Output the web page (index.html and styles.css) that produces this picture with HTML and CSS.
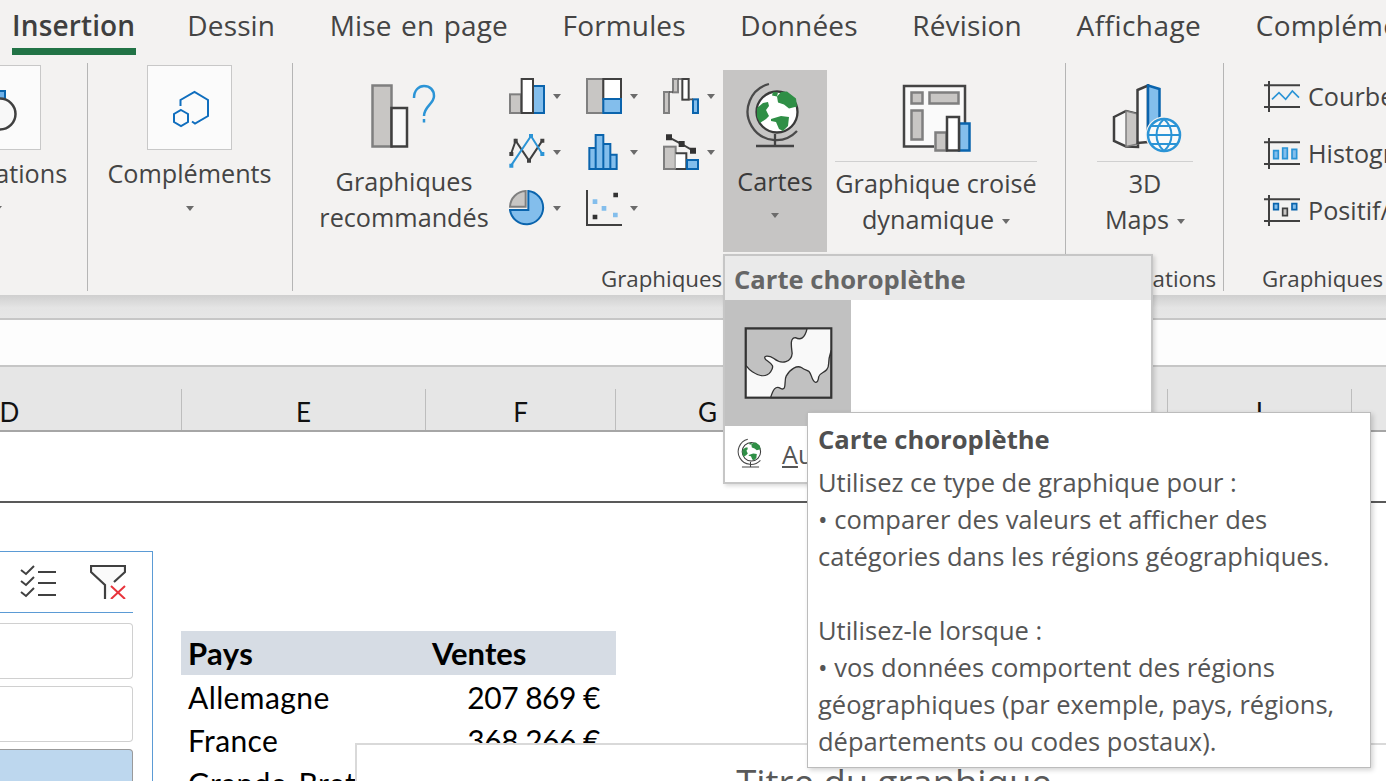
FILE: index.html
```html
<!DOCTYPE html>
<html lang="fr">
<head>
<meta charset="utf-8">
<title>Excel - Insertion</title>
<link rel="stylesheet" href="styles.css">
</head>
<body>
<svg class="defs" width="0" height="0" aria-hidden="true">
  <symbol id="globe" viewBox="746 82 60 70">
    <path d="M770 84 A28.500 28.500 0 1 0 798 131" fill="none" stroke="#4a4a4a" stroke-width="2.300"/>
    <circle cx="778" cy="112" r="20.500" fill="#fff" stroke="#3a3a3a" stroke-width="2.300"/>
    <path d="M782 92 l6 -.5 9 7 1 8 -8 2 -5 -4 -6 -2 -1 -6z M774 92 l5 .5 -1 4 -5 -1z M758 108 l6 -5 5 -1 1 4 -3 4 3 6 -3 3 -6 4 -3 -6z M772 119 l10 -3 8 1 -1 9 -5 5 -4 -2 -3 -7 -5 -1z" fill="#2f8f46"/>
    <path d="M776 134 V146 M757 146 H795" fill="none" stroke="#444" stroke-width="2.300"/>
  </symbol>
  <symbol id="spark-frame" viewBox="0 0 108 93">
    <path d="M15 0 V93 M0 13 H108 M0 78 H108" fill="none" stroke="#404040" stroke-width="6"/>
  </symbol>
</svg>

<section class="ribbon">
  <nav class="tabs">
    <span class="tab tab-active">Insertion</span>
    <span class="tab">Dessin</span>
    <span class="tab">Mise en page</span>
    <span class="tab">Formules</span>
    <span class="tab">Données</span>
    <span class="tab">Révision</span>
    <span class="tab tab-wide">Affichage</span>
    <span class="tab">Compléments</span>
  </nav>
  <div class="groups">
    <div class="group group-illus">
      <div class="tile-btn tile-btn-clip">
        <div class="tile">
          <svg class="tile-svg" viewBox="0 0 84 84">
            <rect x="40" y="25" width="8" height="10" fill="#6fb1e8" stroke="#0a64ad" stroke-width="2"/>
            <circle cx="43" cy="48" r="15.500" fill="#f8f8f8" stroke="#404040" stroke-width="2.500"/>
          </svg>
        </div>
        <span class="btn-label">Illustrations</span>
        <i class="caret caret-block"></i>
      </div>
    </div>
    <div class="group group-addins">
      <div class="tile-btn tile-btn-addins">
        <div class="tile">
          <svg class="tile-svg" viewBox="0 0 84 84">
            <path d="M32.500 40 V34 L46.500 26 L60 34 V50 L47 57.500 L44 55.500 M33 44 L40 48 V56 L33 60 L26 56 V48 Z" fill="none" stroke="#106ebe" stroke-width="2"/>
          </svg>
        </div>
        <span class="btn-label">Compléments</span>
        <i class="caret caret-block"></i>
      </div>
    </div>
    <div class="group group-charts">
      <div class="charts-row">
        <div class="big-btn big-rec">
          <svg class="icon-rec" viewBox="371 84 66 64">
            <rect x="372.500" y="85.500" width="19" height="61" fill="#c8c6c4" stroke="#7f7f7f" stroke-width="2.500"/>
            <rect x="391.500" y="108" width="15.500" height="38.500" fill="#f8f8f8" stroke="#404040" stroke-width="2.500"/>
            <path d="M414 98 C414 90 419 86 424 86 C430 86 434 90 434 96 C434 104 424 106 424 116 M424 119 V122.500" fill="none" stroke="#2b94d6" stroke-width="2.500"/>
          </svg>
          <span class="big-text">Graphiques<br>recommandés</span>
        </div>
        <div class="chart-grid">
          <div class="mini">
            <svg class="mini-svg" viewBox="0 0 108 108"><rect x="3" y="49" width="33" height="56" fill="#c8c6c4" stroke="#7f7f7f" stroke-width="6"/><rect x="72" y="24" width="33" height="81" fill="#83beec" stroke="#0a64ad" stroke-width="6"/><rect x="38" y="3" width="34" height="102" fill="#fff" stroke="#404040" stroke-width="6"/></svg>
            <i class="caret"></i>
          </div>
          <div class="mini">
            <svg class="mini-svg" viewBox="0 0 108 108"><rect x="3" y="3" width="49" height="102" fill="#c8c6c4" stroke="#7f7f7f" stroke-width="6"/><rect x="52" y="3" width="53" height="60" fill="#fff" stroke="#404040" stroke-width="6"/><rect x="52" y="63" width="53" height="42" fill="#83beec" stroke="#0a64ad" stroke-width="6"/></svg>
            <i class="caret"></i>
          </div>
          <div class="mini">
            <svg class="mini-svg" viewBox="0 0 108 108"><rect x="3" y="42" width="15" height="63" fill="#c8c6c4" stroke="#7f7f7f" stroke-width="6"/><rect x="30" y="3" width="15" height="40" fill="#c8c6c4" stroke="#7f7f7f" stroke-width="6"/><rect x="58" y="3" width="19" height="62" fill="#fff" stroke="#404040" stroke-width="6"/><rect x="90" y="64" width="15" height="41" fill="#83beec" stroke="#0a64ad" stroke-width="6"/><path d="M18 42 H30 M45 3 H58 M77 64 H90" stroke="#555" stroke-width="5"/></svg>
            <i class="caret"></i>
          </div>
          <div class="mini">
            <svg class="mini-svg" viewBox="0 0 108 108"><path d="M6 60 L20 20 L60 80 L100 20" fill="none" stroke="#404040" stroke-width="6"/><path d="M6 95 L66 6 L100 60" fill="none" stroke="#2b94d6" stroke-width="6"/><path d="M1 54 h12 v12 h-12z M14 14 h12 v12 h-12z M54 74 h12 v12 h-12z M94 14 h12 v12 h-12z" fill="#404040"/><path d="M1 89 h12 v12 h-12z M60 0 h12 v12 h-12z M94 54 h12 v12 h-12z" fill="#2b94d6"/></svg>
            <i class="caret"></i>
          </div>
          <div class="mini">
            <svg class="mini-svg" viewBox="-7 0 108 108"><path d="M3 42 H22 V105 H3Z M45 30 H66 V105 H45Z M66 62 H85 V105 H66Z M22 3 H45 V105 H22Z" fill="#83beec" stroke="#0a64ad" stroke-width="6"/></svg>
            <i class="caret"></i>
          </div>
          <div class="mini">
            <svg class="mini-svg" viewBox="0 0 108 108"><rect x="3" y="38" width="35" height="67" fill="#c8c6c4" stroke="#7f7f7f" stroke-width="6"/><path d="M38 58 H70 V105 H38" fill="#fff" stroke="#404040" stroke-width="6"/><rect x="72" y="78" width="33" height="27" fill="#83beec" stroke="#0a64ad" stroke-width="6"/><path d="M18 10 L56 30 L90 50" fill="none" stroke="#404040" stroke-width="6"/><path d="M9 1 h18 v18 h-18z M47 21 h18 v18 h-18z M81 41 h18 v18 h-18z" fill="#333"/></svg>
            <i class="caret"></i>
          </div>
          <div class="mini">
            <svg class="mini-svg" viewBox="0 0 108 108"><path d="M3 50 A49 49 0 0 1 50 3 V50Z" fill="#c8c6c4" stroke="#7f7f7f" stroke-width="6"/><path d="M58 3 A50 50 0 1 1 3 60 H58Z" fill="#83beec" stroke="#0a64ad" stroke-width="6"/></svg>
            <i class="caret"></i>
          </div>
          <div class="mini">
            <svg class="mini-svg" viewBox="0 0 108 108"><path d="M3 0 V105 H108" fill="none" stroke="#404040" stroke-width="6"/><path d="M82 8 h14 v14 h-14z M20 74 h14 v14 h-14z" fill="#333"/><path d="M20 28 h14 v14 h-14z M47 48 h14 v14 h-14z M81 68 h14 v14 h-14z" fill="#83beec"/></svg>
            <i class="caret"></i>
          </div>
        </div>
        <div class="big-btn big-maps">
          <svg class="icon-globe"><use href="#globe"/></svg>
          <span class="big-text">Cartes</span>
          <i class="caret caret-block"></i>
        </div>
        <div class="big-btn big-pivot">
          <svg class="icon-pivot" viewBox="902 84 70 68">
            <path d="M934 146.500 H904 V86 H965 V125" fill="#fafafa" stroke="#444" stroke-width="2.500"/>
            <path d="M911.500 92.500 h11 v11 h-11z M929.500 92.500 h29 v11 h-29z M911.500 110.500 h11 v29 h-11z M935.500 132.500 h11 v18 h-11z" fill="#c8c6c4" stroke="#7f7f7f" stroke-width="2.500"/>
            <rect x="959" y="123.500" width="10.500" height="27" fill="#83beec" stroke="#0a64ad" stroke-width="2.500"/>
            <rect x="947" y="117" width="12" height="33.500" fill="#fff" stroke="#404040" stroke-width="2.500"/>
          </svg>
          <div class="rule"></div>
          <span class="big-text big-text-split">Graphique croisé<br>dynamique<i class="caret caret-inline"></i></span>
        </div>
      </div>
      <div class="group-label group-label-charts">Graphiques</div>
    </div>
    <div class="group group-tours">
      <div class="big-btn big-3d">
        <svg class="icon-3d" viewBox="1112 84 72 70">
          <path d="M1114 117 L1126 111 L1138 114 V147 L1126 146.500 L1114 141Z" fill="#f8f8f8" stroke="#404040" stroke-width="2.500"/>
          <path d="M1126 111 L1138 114 V144 L1126 146.500Z" fill="#c8c6c4" stroke="#7f7f7f" stroke-width="1.500"/>
          <path d="M1137.500 90 L1148 85.500 V142 L1137.500 143Z" fill="#fafafa" stroke="#404040" stroke-width="2.500"/>
          <path d="M1148 85.500 L1159.500 89 V125 L1148 132Z" fill="#83beec" stroke="#0a64ad" stroke-width="2.500"/>
          <circle cx="1164" cy="135" r="18.500" fill="#f3f2f1"/>
          <circle cx="1164" cy="135" r="16" fill="#fafafa" stroke="#2b94d6" stroke-width="2.500"/>
          <path d="M1148 135 H1180 M1151 126 H1177 M1151 144 H1177 M1164 119 C1154 128 1154 142 1164 151 C1174 142 1174 128 1164 119Z" fill="none" stroke="#2b94d6" stroke-width="2"/>
        </svg>
        <div class="rule rule-short"></div>
        <span class="big-text big-text-split">3D<br>Maps<i class="caret caret-inline"></i></span>
      </div>
      <div class="group-label group-label-center">Présentations</div>
    </div>
    <div class="group group-spark">
      <div class="spark-list">
        <div class="spark-row">
          <svg class="spark-svg" viewBox="0 0 108 93"><use href="#spark-frame"/><path d="M24 55 L45 35 L65 55 L85 30 L105 50" fill="none" stroke="#2b94d6" stroke-width="5"/></svg>
          <span class="spark-text">Courbe</span>
        </div>
        <div class="spark-row">
          <svg class="spark-svg" viewBox="0 0 108 93"><use href="#spark-frame"/><path d="M29 38 h14 v24 h-14z M56 30 h14 v32 h-14z M84 34 h14 v28 h-14z" fill="#83beec" stroke="#2b94d6" stroke-width="5"/></svg>
          <span class="spark-text">Histogramme</span>
        </div>
        <div class="spark-row">
          <svg class="spark-svg" viewBox="0 0 108 93"><use href="#spark-frame"/><path d="M29 26 h14 v18 h-14z M84 26 h14 v18 h-14z" fill="#83beec" stroke="#0a64ad" stroke-width="5"/><path d="M56 40 h14 v22 h-14z" fill="#c8c6c4" stroke="#404040" stroke-width="5"/></svg>
          <span class="spark-text">Positif/Négatif</span>
        </div>
      </div>
      <div class="group-label group-label-spark">Graphiques sparkline</div>
    </div>
  </div>
</section>

<div class="formula-gap"></div>
<div class="formula-bar"></div>

<div class="col-headers">
  <span class="col col-d">D</span>
  <span class="col col-e">E</span>
  <span class="col col-f">F</span>
  <span class="col col-g">G</span>
  <span class="col col-h">H</span>
  <span class="col col-i">I</span>
  <span class="col col-j">J</span>
</div>

<main class="sheet">
  <div class="sheet-top"></div>
  <div class="sheet-body">
    <aside class="slicer">
      <div class="slicer-tools">
        <svg class="tool-check" viewBox="0 0 36 33">
          <path d="M1 5 L6 9 L14 1 M1 16 L6 20 L14 12 M1 27 L6 31 L14 23" fill="none" stroke="#404040" stroke-width="2"/>
          <path d="M18 7 H36 M18 18 H36 M18 30 H36" stroke="#404040" stroke-width="2"/>
        </svg>
        <svg class="tool-filter" viewBox="0 0 36 34">
          <path d="M15 34 V20 L1 7 V1 H35 V7 L24 17" fill="#fafafa" stroke="#404040" stroke-width="2.200"/>
          <path d="M21 21 L35 34 M35 21 L21 34" stroke="#e8343c" stroke-width="2"/>
        </svg>
      </div>
      <div class="slicer-item"></div>
      <div class="slicer-item"></div>
      <div class="slicer-item slicer-item-on"></div>
    </aside>
    <table class="data">
      <thead>
        <tr><th class="cell-country">Pays</th><th class="cell-sales">Ventes</th></tr>
      </thead>
      <tbody>
        <tr><td class="cell-country">Allemagne</td><td class="cell-num">207 869 €</td></tr>
        <tr><td class="cell-country">France</td><td class="cell-num">368 266 €</td></tr>
        <tr><td class="cell-country">Grande-Bretagne</td><td class="cell-num">112 410 €</td></tr>
      </tbody>
    </table>
  </div>
  <div class="chart"><div class="chart-title">Titre du graphique</div></div>
</main>

<div class="dropdown">
  <div class="dd-head">Carte choroplèthe</div>
  <div class="dd-body">
    <div class="dd-tile">
      <svg class="choro" viewBox="86 230 266 217">
        <rect x="90" y="234" width="258" height="209" fill="#f9f9f9"/>
        <path d="M275 235 C268 265 255 270 240 262 C222 262 228 290 230 310 C228 335 200 345 175 325 C160 315 140 315 150 328 C165 340 180 345 165 365 C150 385 125 375 110 365 C98 358 95 350 90 345 L90 235 Z" fill="#c1c1c1" stroke="#333" stroke-width="4"/>
        <path d="M165 443 C172 420 180 405 195 415 C215 425 205 390 212 378 C225 355 245 345 258 352 C275 365 280 355 288 378 C295 400 308 405 310 380 C312 365 340 370 340 340 C340 320 345 310 348 300 L348 443 Z" fill="#c1c1c1" stroke="#333" stroke-width="4"/>
        <rect x="90" y="234" width="258" height="209" fill="none" stroke="#333" stroke-width="6.500"/>
      </svg>
    </div>
  </div>
  <div class="dd-foot">
    <svg class="globe-small"><use href="#globe"/></svg>
    <span class="dd-more"><u>A</u>utres graphiques de carte...</span>
  </div>
</div>

<div class="tooltip">
  <div class="tt-title">Carte choroplèthe</div>
  <p class="tt-line">Utilisez ce type de graphique pour :</p>
  <p class="tt-line">• comparer des valeurs et afficher des</p>
  <p class="tt-line">catégories dans les régions géographiques.</p>
  <p class="tt-line tt-gap">Utilisez-le lorsque :</p>
  <p class="tt-line">• vos données comportent des régions</p>
  <p class="tt-line">géographiques (par exemple, pays, régions,</p>
  <p class="tt-line">départements ou codes postaux).</p>
</div>
</body>
</html>
```
FILE: styles.css
```css
* { box-sizing: border-box; }
html, body { margin: 0; padding: 0; }
body {
  position: relative;
  width: 1386px;
  height: 781px;
  overflow: hidden;
  background: #fff;
  font-family: "Open Sans", "Noto Sans", sans-serif;
  color: #444;
}
.defs { position: absolute; }

/* ribbon */
.ribbon { height: 295px; background: #f3f2f1; overflow: hidden; }
.tabs {
  display: flex;
  gap: 54.600px;
  height: 63px;
  padding: 4px 0 0 12px;
  white-space: nowrap;
}
.tab { font-size: 28px; line-height: 43px; height: 51px; word-spacing: 2px; letter-spacing: .15px; }
.tab-wide { letter-spacing: .45px; }
.tab-active {
  font-weight: 600;
  color: #3f3f3f;
  padding-right: 1px;
  margin-right: -3.600px;
  border-bottom: 7px solid #217346;
}
.groups { display: flex; height: 228px; }
.group { position: relative; flex: none; border-right: 1.500px solid #b5b5b5; height: 228px; }
.group-illus { width: 88px; }
.group-addins { width: 205px; }
.group-charts { width: 773px; }
.group-tours { width: 158px; }
.group-spark { flex: 1; border-right: none; }

.tile-btn {
  display: flex;
  flex-direction: column;
  align-items: center;
  padding-top: 2px;
  white-space: nowrap;
}
.tile-btn-clip { width: 84px; margin-left: -44px; }
.tile-btn-addins { margin-left: -1px; }
.tile {
  width: 85px;
  height: 85px;
  flex: none;
  background: #fbfbfb;
  border: 1px solid #c8c8c8;
}
.tile-svg { display: block; width: 84px; height: 84px; }
.btn-label { font-size: 25.200px; line-height: 32px; margin-top: 7px; }
.caret {
  display: block;
  width: 0;
  height: 0;
  border-left: 4.500px solid transparent;
  border-right: 4.500px solid transparent;
  border-top: 5px solid #6b6b6b;
  flex: none;
}
.caret-block { margin-top: 17px; }
.caret-inline { display: inline-block; margin-left: 8px; vertical-align: 5px; }

.charts-row { display: flex; height: 190px; padding-top: 7px; }
.big-btn {
  display: flex;
  flex-direction: column;
  align-items: center;
  flex: none;
  white-space: nowrap;
}
.big-text { font-size: 25.200px; line-height: 36px; text-align: center; }
.big-rec { width: 168px; margin-left: 27px; padding-top: 14px; }
.icon-rec { width: 66px; height: 64px; }
.big-rec .big-text { margin-top: 16px; line-height: 35.500px; }

.chart-grid {
  display: grid;
  grid-template-columns: repeat(3, 77px);
  grid-auto-rows: 56px;
  width: 214px;
  margin-left: 21px;
  padding-top: 8px;
}
.mini { display: flex; align-items: center; gap: 8px; height: 36px; }
.mini-svg { width: 36px; height: 36px; flex: none; }

.big-maps { width: 104px; height: 182px; background: #c6c5c4; color: #3a3a3a; padding-top: 12px; }
.icon-globe { width: 60px; height: 70px; }
.big-maps .big-text { margin-top: 11px; }
.big-maps .caret { margin-top: 14px; }

.big-pivot { width: 202px; margin-left: 8px; padding-top: 14px; }
.icon-pivot { width: 70px; height: 68px; margin-left: 2px; }
.rule { width: 100%; height: 1px; background: #d0d0d0; margin-top: 9px; flex: none; }
.big-text-split { margin-top: 3px; }

.group-label {
  position: absolute;
  top: 202px;
  font-size: 22.300px;
  line-height: 28px;
  white-space: nowrap;
}
.group-label-charts { left: 308px; }
.group-label-center { left: 0; right: 0; text-align: center; }
.group-label-spark { left: 38px; }

.big-3d { width: 96px; margin-left: 31px; padding-top: 21px; }
.icon-3d { width: 72px; height: 70px; margin-left: 6px; }
.big-3d .rule { margin-top: 7px; }

.spark-list { display: flex; flex-direction: column; gap: 25px; padding: 17px 0 0 40px; }
.spark-row { display: flex; align-items: center; gap: 8px; height: 32px; white-space: nowrap; }
.spark-svg { width: 36px; height: 31px; flex: none; }
.spark-text { font-size: 25.200px; }

/* formula area */
.formula-gap { height: 23px; background: linear-gradient(#cfcfcf, #e4e4e4 55%, #e6e6e6); }
.formula-bar {
  height: 49px;
  background: #fdfdfd;
  border-top: 2px solid #c6c6c6;
  border-bottom: 2px solid #c6c6c6;
}

/* column headers */
.col-headers {
  display: flex;
  height: 65px;
  padding-top: 22px;
  background: #e6e6e6;
  border-bottom: 2px solid #a6a6a6;
  font-family: "Lato", "Open Sans", sans-serif;
  color: #111;
  font-size: 26px;
  line-height: 46px;
  overflow: hidden;
}
.col { display: block; flex: none; text-align: center; border-right: 1.500px solid #bdbdbd; }
.col-d { width: 344px; margin-left: -162px; }
.col-e { width: 244px; }
.col-f { width: 190px; }
.col-g { width: 184px; }
.col-h { width: 368px; }
.col-i { width: 184px; }
.col-j { width: 184px; }

/* sheet */
.sheet { position: relative; height: 349px; overflow: hidden; background: #fff; }
.sheet-top { height: 71px; border-bottom: 2.500px solid #595959; }
.sheet-body { display: flex; align-items: flex-start; }
.slicer {
  flex: none;
  width: 153px;
  height: 300px;
  margin-top: 48px;
  border: 1px solid #5b9bd5;
  border-left: none;
}
.slicer-tools {
  display: flex;
  align-items: flex-start;
  gap: 34px;
  width: 133px;
  height: 61px;
  padding: 13px 0 0 20px;
  border-bottom: 1px solid #5b9bd5;
}
.tool-check { width: 36px; height: 33px; flex: none; }
.tool-filter { width: 36px; height: 34px; flex: none; }
.slicer-item {
  width: 133px;
  height: 56px;
  margin-top: 10px;
  background: #fff;
  border: 1px solid #d0d0d0;
  border-left: none;
  border-radius: 0 4px 4px 0;
}
.slicer-item + .slicer-item { margin-top: 7px; }
.slicer-item-on { background: #bdd7ee; border-color: #9a9a9a; }

.data {
  flex: none;
  width: 435px;
  margin: 128px 0 0 28px;
  border-collapse: collapse;
  font-family: "Lato", "Open Sans", sans-serif;
  font-size: 30px;
  color: #000;
  table-layout: fixed;
}
.data th { height: 44px; background: #d6dce4; font-size: 31px; font-weight: 700; text-align: left; padding: 0; }
.data td { height: 43px; padding: 0; line-height: 36px; }
.cell-country { width: 245px; padding-left: 7px !important; white-space: nowrap; letter-spacing: .4px; }
.cell-sales { padding-left: 6px !important; }
.cell-num { text-align: right; padding-right: 16px !important; white-space: nowrap; letter-spacing: -.5px; }

.chart {
  position: absolute;
  left: 355px;
  top: 311px;
  width: 1078px;
  height: 120px;
  background: #fff;
  border: 2px solid #d9d9d9;
  text-align: center;
}
.chart-title { font-size: 36.500px; line-height: 40px; margin-top: 17px; color: #595959; }

/* dropdown */
.dropdown {
  position: absolute;
  left: 723px;
  top: 254px;
  width: 430px;
  height: 230px;
  background: #fff;
  border: 2px solid #c6c6c6;
  box-shadow: 2px 2px 4px rgba(0,0,0,.15);
}
.dd-head {
  height: 44px;
  padding-left: 9px;
  background: #eaeaea;
  color: #666;
  font-size: 25.600px;
  font-weight: 700;
  line-height: 47px;
}
.dd-body { height: 126px; }
.dd-tile {
  display: flex;
  align-items: center;
  justify-content: center;
  width: 126px;
  height: 126px;
  background: #c1c1c1;
}
.choro { width: 89px; height: 72px; margin-left: 1px; }
.dd-foot { display: flex; align-items: center; gap: 18px; height: 56px; padding-left: 12px; }
.globe-small { width: 27px; height: 32px; flex: none; }
.dd-more { font-size: 25.200px; white-space: nowrap; color: #555; }

/* tooltip */
.tooltip {
  position: absolute;
  left: 807px;
  top: 412px;
  width: 564px;
  height: 356px;
  padding: 8px 10px 0;
  background: #fff;
  border: 1.500px solid #bcbcbc;
  box-shadow: 2px 2px 5px rgba(0,0,0,.18);
  color: #555;
  font-size: 25.500px;
  white-space: nowrap;
}
.tt-title { font-size: 25.600px; font-weight: 700; line-height: 37px; margin-bottom: 6px; color: #505050; }
.tt-line { margin: 0; line-height: 37px; }
.tt-gap { margin-top: 37px; }
```
